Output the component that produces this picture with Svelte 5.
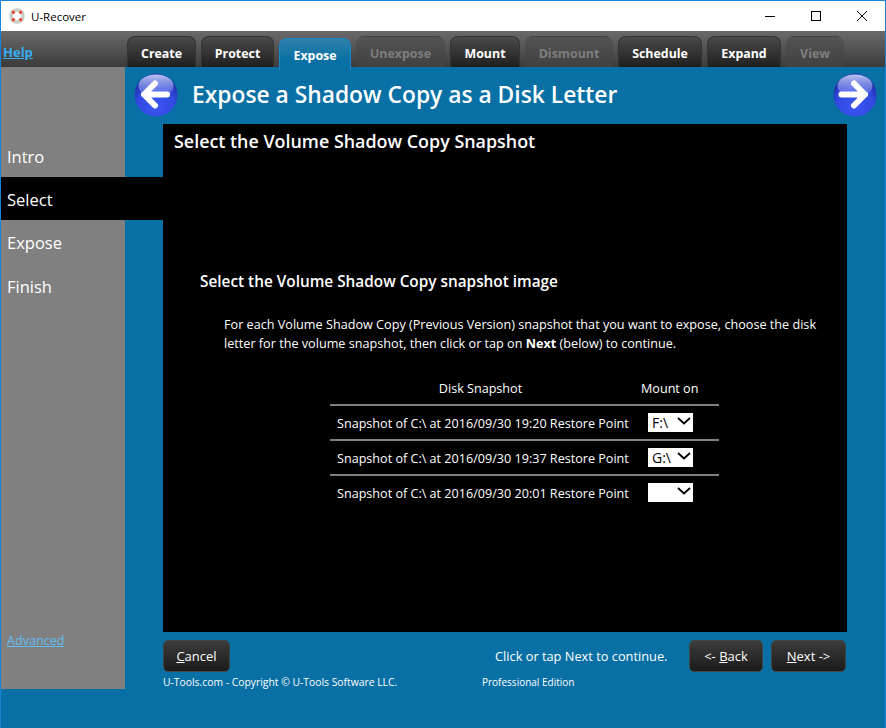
<script lang="ts">
    const tabs = [
        { label: 'Create', width: 69 },
        { label: 'Protect', width: 73 },
        { label: 'Expose', width: 72, active: true },
        { label: 'Unexpose', width: 89, disabled: true },
        { label: 'Mount', width: 70 },
        { label: 'Dismount', width: 88, disabled: true },
        { label: 'Schedule', width: 84 },
        { label: 'Expand', width: 74 },
        { label: 'View', width: 58, disabled: true }
    ];

    const steps = ['Intro', 'Select', 'Expose', 'Finish'];

    const snapshots = [
        { time: '2016/09/30 19:20', letter: 'F:\\' },
        { time: '2016/09/30 19:37', letter: 'G:\\' },
        { time: '2016/09/30 20:01', letter: '' }
    ];

    const letters = ['', 'F:\\', 'G:\\', 'H:\\'];
</script>

<div class="window">
    <header class="titlebar">
        <svg class="app-icon" width="16" height="16" viewBox="0 0 16 16">
            <circle cx="8" cy="8" r="6" fill="none" stroke="#cbcbc6" stroke-width="3.4" />
            <path d="M3.4 3.4 5.4 5.4M12.6 3.4 10.6 5.4M3.4 12.6 5.4 10.6M12.6 12.6 10.6 10.6" stroke="#e8332a" stroke-width="2.6" />
        </svg>
        <span class="app-title">U-Recover</span>
        <div class="window-controls">
            <svg width="12" height="12" viewBox="0 0 12 12"><path d="M1 6.5h10" stroke="#000" /></svg>
            <svg width="12" height="12" viewBox="0 0 12 12"><rect x="1.5" y="1.5" width="9" height="9" fill="none" stroke="#000" /></svg>
            <svg width="12" height="12" viewBox="0 0 12 12"><path d="M1 1l10 10M11 1 1 11" stroke="#000" /></svg>
        </div>
    </header>

    <nav class="tabbar">
        <a class="help" href="#help">Help</a>
        <div class="tabs">
            {#each tabs as tab}
                <div class="tab" class:active={tab.active} class:disabled={tab.disabled} style:width="{tab.width}px">{tab.label}</div>
            {/each}
        </div>
    </nav>

    <div class="body">
        <aside class="sidebar">
            <ul class="steps">
                {#each steps as step}
                    <li class="step" class:current={step === 'Select'}>{step}</li>
                {/each}
            </ul>
            <a class="advanced" href="#advanced">Advanced</a>
        </aside>

        <main class="main">
            <div class="page-head">
                <svg class="nav-arrow" width="44" height="44" viewBox="0 0 44 44">
                    <defs>
                        <radialGradient id="orb" cx="50%" cy="75%" r="62%">
                            <stop offset="0" stop-color="#3d55f5" />
                            <stop offset="0.7" stop-color="#3149e0" />
                            <stop offset="1" stop-color="#2233b0" />
                        </radialGradient>
                        <linearGradient id="shine" x1="0" y1="0" x2="0" y2="1">
                            <stop offset="0" stop-color="#d6dcff" stop-opacity="0.85" />
                            <stop offset="1" stop-color="#8a98f5" stop-opacity="0.25" />
                        </linearGradient>
                    </defs>
                    <circle cx="22" cy="22" r="21.5" fill="url(#orb)" />
                    <ellipse cx="22" cy="13" rx="17.5" ry="11.5" fill="url(#shine)" />
                    <path d="M33 21.5H10M21 10.5 10 21.5 21 32.5" fill="none" stroke="#fff" stroke-width="6" stroke-linecap="round" stroke-linejoin="round" />
                </svg>
                <h1>Expose a Shadow Copy as a Disk Letter</h1>
                <svg class="nav-arrow next" width="44" height="44" viewBox="0 0 44 44">
                    <circle cx="22" cy="22" r="21.5" fill="url(#orb)" />
                    <ellipse cx="22" cy="13" rx="17.5" ry="11.5" fill="url(#shine)" />
                    <path d="M8.5 21.5H32M21 10.5 32 21.5 21 32.5" fill="none" stroke="#fff" stroke-width="6" stroke-linecap="round" stroke-linejoin="round" />
                </svg>
            </div>

            <section class="panel">
                <h2>Select the Volume Shadow Copy Snapshot</h2>
                <h3>Select the Volume Shadow Copy snapshot image</h3>
                <p class="hint">
                    For each Volume Shadow Copy (Previous Version) snapshot that you want to expose, choose the disk
                    letter for the volume snapshot, then click or tap on <b>Next</b> (below) to continue.
                </p>
                <div class="snapshots">
                    <div class="snap-head">
                        <span class="col-name">Disk Snapshot</span>
                        <span class="col-mount">Mount on</span>
                    </div>
                    {#each snapshots as snap}
                        <div class="snap-row">
                            <span class="snap-name">Snapshot of C:\ at {snap.time} Restore Point</span>
                            <div class="letter">
                                <select value={snap.letter}>
                                    {#each letters as letter}
                                        <option value={letter}>{letter}</option>
                                    {/each}
                                </select>
                                <svg width="14" height="8" viewBox="0 0 14 8"><path d="M1 1l6 5.5L13 1" fill="none" stroke="#000" stroke-width="1.8" /></svg>
                            </div>
                        </div>
                    {/each}
                </div>
            </section>

            <div class="actions">
                <button class="btn cancel"><u>C</u>ancel</button>
                <span class="next-hint">Click or tap Next to continue.</span>
                <button class="btn back">&lt;- <u>B</u>ack</button>
                <button class="btn next-btn"><u>N</u>ext -&gt;</button>
            </div>
            <div class="legal">
                <span class="copyright">U-Tools.com - Copyright © U-Tools Software LLC.</span>
                <span class="edition">Professional Edition</span>
            </div>
        </main>
    </div>
</div>

<style>
    :global(body) {
        margin: 0;
        background: #0870a4;
    }

    .window {
        box-sizing: border-box;
        width: 886px;
        height: 728px;
        border: 1px solid #1883d7;
        border-bottom: 0;
        background: #0870a4;
        display: flex;
        flex-direction: column;
        overflow: hidden;
        font-family: "Open Sans", "Noto Sans", sans-serif;
        color: #fff;
    }

    .titlebar {
        height: 30px;
        flex: none;
        background: #fff;
        color: #000;
        display: flex;
        align-items: center;
        padding-left: 8px;
        box-sizing: border-box;
    }

    .app-icon {
        margin-right: 6px;
    }

    .app-title {
        font-size: 11.5px;
    }

    .window-controls {
        margin-left: auto;
        display: flex;
        align-items: center;
        gap: 34px;
        padding-right: 17px;
    }

    .tabbar {
        height: 36px;
        flex: none;
        display: flex;
        background: linear-gradient(#6a6a6a, #3b3b3b);
    }

    .help {
        width: 126px;
        flex: none;
        padding: 12px 0 0 2px;
        box-sizing: border-box;
        font-size: 13px;
        font-weight: 700;
        color: #38aef5;
    }

    .tabs {
        display: flex;
        gap: 5px;
        padding-top: 5px;
    }

    .tab {
        box-sizing: border-box;
        height: 31px;
        border: 1px solid #333;
        border-bottom: 0;
        border-radius: 8px 8px 0 0;
        background: linear-gradient(#4a4a4a, #1f1f1f);
        text-align: center;
        font-size: 12.4px;
        font-weight: 700;
        line-height: 33px;
    }

    .tab.disabled {
        border-color: transparent;
        background: linear-gradient(#535353, #414141);
        color: #7e7e7e;
    }

    .tab.active {
        height: 32px;
        margin-top: 2px;
        border-color: #1a88c8;
        background: linear-gradient(#2f81aa, #0870a4 70%);
        line-height: 34px;
    }

    .body {
        flex: 1;
        display: flex;
        min-height: 0;
    }

    .sidebar {
        width: 124px;
        height: 622px;
        flex: none;
        background: #808080;
        position: relative;
        display: flex;
        flex-direction: column;
        font-size: 16.5px;
    }

    .steps {
        list-style: none;
        margin: 67px 0 0;
        padding: 0;
    }

    .step {
        height: 43px;
        line-height: 45px;
        padding-left: 6px;
    }

    .step:last-child {
        line-height: 47px;
    }

    .step.current {
        width: 162px;
        box-sizing: border-box;
        background: #000;
        position: relative;
    }

    .advanced {
        margin-top: auto;
        margin-bottom: 40px;
        margin-left: 6px;
        font-size: 12.6px;
        color: #60bdf5;
    }

    .main {
        flex: 1;
        min-width: 0;
        display: flex;
        flex-direction: column;
        padding-left: 38px;
        position: relative;
    }

    .page-head {
        height: 57px;
        flex: none;
        display: flex;
        align-items: center;
        margin-left: -29px;
        margin-right: 8px;
        box-sizing: border-box;
    }

    .nav-arrow {
        flex: none;
        margin-bottom: 1px;
    }

    .nav-arrow.next {
        margin-left: auto;
    }

    h1 {
        margin: 0 0 2px 14px;
        font-size: 22.8px;
        font-weight: 600;
    }

    .panel {
        box-sizing: border-box;
        width: 684px;
        height: 508px;
        flex: none;
        background: #000;
        padding: 4px 11px;
        position: relative;
    }

    h2 {
        margin: 0;
        font-size: 17.9px;
        font-weight: 600;
        line-height: 26px;
    }

    h3 {
        margin: 115px 0 0 26px;
        font-size: 15.35px;
        font-weight: 600;
        line-height: 24px;
    }

    .hint {
        margin: 22px 0 0 50px;
        width: 610px;
        font-size: 12.65px;
        line-height: 18.5px;
    }

    .snapshots {
        width: 389px;
        margin: 21px 0 0 156px;
        font-size: 12.6px;
    }

    .snap-head {
        height: 31px;
        display: flex;
        align-items: center;
    }

    .col-name {
        width: 301px;
        text-align: center;
    }

    .col-mount {
        padding-left: 10px;
    }

    .snap-row {
        height: 33px;
        border-top: 2px solid #808080;
        display: flex;
        align-items: center;
        padding-left: 7px;
    }

    .snap-name {
        width: 311px;
        flex: none;
        white-space: nowrap;
        padding-top: 2px;
    }

    .letter {
        position: relative;
        width: 45px;
        height: 19px;
    }

    .letter select {
        appearance: none;
        display: block;
        box-sizing: border-box;
        width: 100%;
        height: 100%;
        border: 0;
        border-radius: 0;
        background: #fff;
        color: #000;
        font: 14px "Open Sans", sans-serif;
        padding: 0 0 0 4px;
    }

    .letter svg {
        position: absolute;
        right: 2px;
        top: 4px;
        pointer-events: none;
    }

    .actions {
        display: flex;
        align-items: center;
        height: 32px;
        flex: none;
        margin-top: 8px;
        font-size: 12.8px;
    }

    .btn {
        box-sizing: border-box;
        height: 32px;
        border: 1px solid #404548;
        border-radius: 5px;
        background: linear-gradient(#3c3c3c, #1b1b1b);
        color: #fff;
        font: 13px "Open Sans", sans-serif;
        padding: 0;
    }

    .cancel {
        width: 67px;
    }

    .next-hint {
        margin-left: 265px;
        width: 194px;
    }

    .back {
        width: 74px;
    }

    .next-btn {
        width: 75px;
        margin-left: 8px;
    }

    .legal {
        display: flex;
        font-size: 10.35px;
        margin-top: 2px;
        line-height: 16px;
    }

    .copyright {
        width: 319px;
    }

    .edition {
        font-size: 10px;
    }
</style>
